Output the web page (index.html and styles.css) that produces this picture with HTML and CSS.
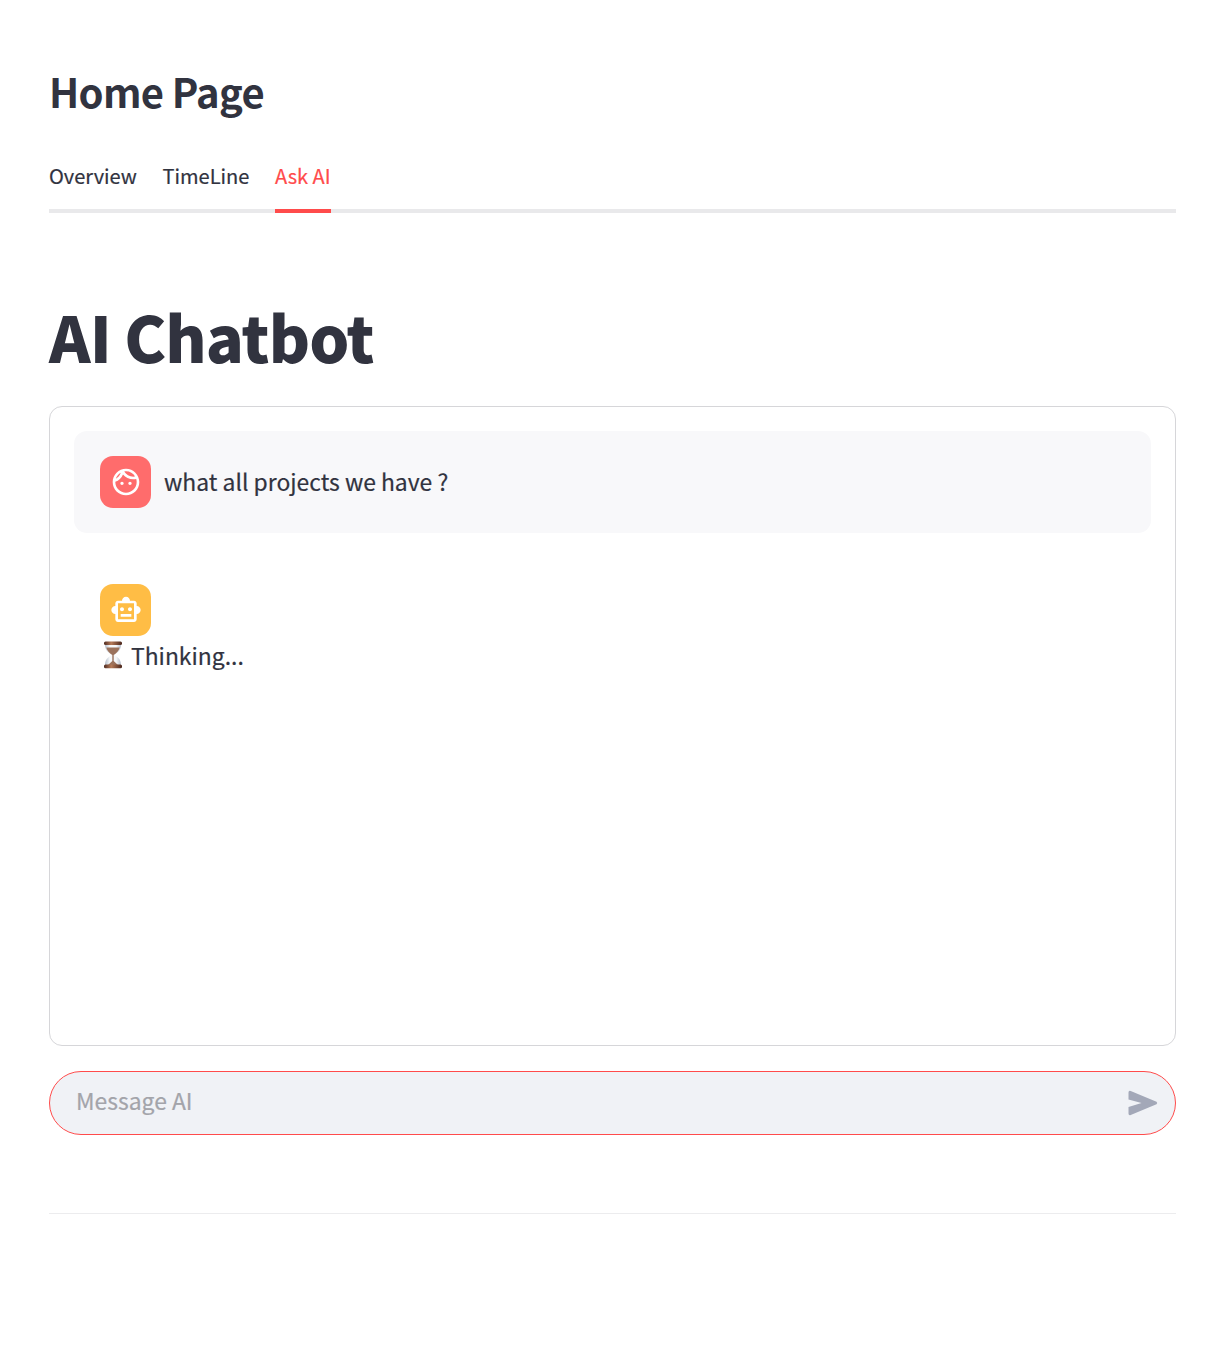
FILE: index.html
```html
<!DOCTYPE html>
<html lang="en">
<head>
<meta charset="utf-8">
<title>Home Page</title>
<link rel="stylesheet" href="styles.css">
</head>
<body>
<main class="page">
  <h2 class="page-title">Home Page</h2>
  <nav class="tabs">
    <a class="tab">Overview</a>
    <a class="tab">TimeLine</a>
    <a class="tab tab-active">Ask AI</a>
  </nav>
  <h1 class="title">AI Chatbot</h1>
  <section class="chat">
    <div class="message message-user">
      <span class="avatar avatar-user">
        <svg class="avatar-icon" viewBox="0 0 24 24"><path d="M10.25 13c0 .69-.56 1.25-1.25 1.25S7.75 13.69 7.75 13s.56-1.25 1.25-1.25 1.25.56 1.25 1.25zM15 11.75c-.69 0-1.25.56-1.25 1.25s.56 1.25 1.25 1.25 1.25-.56 1.25-1.25-.56-1.25-1.25-1.25zm7 .25c0 5.52-4.48 10-10 10S2 17.52 2 12 6.48 2 12 2s10 4.48 10 10zM10.66 4.12C12.06 6.44 14.6 8 17.5 8c.46 0 .91-.05 1.34-.12C17.44 5.56 14.9 4 12 4c-.46 0-.91.05-1.34.12zM4.42 9.47c1.71-.97 3.03-2.55 3.66-4.44C6.37 6 5.05 7.58 4.42 9.47zM20 12c0-.78-.12-1.53-.33-2.24-.7.15-1.42.24-2.17.24-3.13 0-5.92-1.44-7.76-3.69C8.69 8.87 6.6 10.88 4 11.86c.01.04 0 .09 0 .14 0 4.42 3.58 8 8 8s8-3.58 8-8z"/></svg>
      </span>
      <p class="message-text">what all projects we have ?</p>
    </div>
    <div class="message message-assistant">
      <span class="avatar avatar-assistant">
        <svg class="avatar-icon" viewBox="0 0 24 24"><path d="M20 9V7c0-1.1-.9-2-2-2h-3c0-1.66-1.34-3-3-3S9 3.34 9 5H6c-1.1 0-2 .9-2 2v2c-1.66 0-3 1.34-3 3s1.34 3 3 3v4c0 1.1.9 2 2 2h12c1.1 0 2-.9 2-2v-4c1.66 0 3-1.34 3-3s-1.34-3-3-3zm-2 10H6V7h12v12zm-9-6c-.83 0-1.5-.67-1.5-1.5S8.17 10 9 10s1.5.67 1.5 1.5S9.83 13 9 13zm7.5-1.5c0 .83-.67 1.5-1.5 1.5s-1.5-.67-1.5-1.5.67-1.5 1.5-1.5 1.5.67 1.5 1.5zM8 15h8v2H8v-2z"/></svg>
      </span>
      <div class="thinking">
        <svg class="hourglass" viewBox="0 0 20 28">
          <defs>
            <linearGradient id="wood" x1="0" x2="1" y1="0" y2="0"><stop offset="0" stop-color="#4e2a20"/><stop offset=".4" stop-color="#b57a58"/><stop offset="1" stop-color="#4a261b"/></linearGradient>
            <linearGradient id="glass" x1="0" x2="1" y1="0" y2="0"><stop offset="0" stop-color="#b4bdca"/><stop offset=".3" stop-color="#f6f8fa"/><stop offset=".7" stop-color="#f6f8fa"/><stop offset="1" stop-color="#b4bdca"/></linearGradient>
          </defs>
          <path d="M2 3.500h16c0 5-2.500 7.500-6.500 10.500 4 2.500 6.500 5 6.500 10H2c0-5 2.500-7.500 6.500-10C4.500 11 2 8.500 2 3.500z" fill="url(#glass)"/>
          <path d="M3.300 6.500h13.400c-.8 3.500-3 5.500-6 7.500v6l4.300 4H5l4.300-4v-6C6.300 12 4.100 10 3.300 6.500z" fill="#9b725c"/>
          <rect x="1" y=".5" width="18" height="3.500" rx="1.500" fill="url(#wood)"/>
          <rect x="1" y="23.500" width="18" height="3.800" rx="1.500" fill="url(#wood)"/>
        </svg>
        <p class="message-text">Thinking...</p>
      </div>
    </div>
  </section>
  <form class="composer">
    <span class="placeholder">Message AI</span>
    <svg class="send" viewBox="0 0 30 26"><path d="M.5 2.500Q.5.300 2.700 1L28.500 11.700Q30 13 28.500 14.300L2.700 25Q.5 25.700.5 23.500V17L13.500 13 .5 9.500z"/></svg>
  </form>
  <hr class="divider">
</main>
</body>
</html>
```
FILE: styles.css
```css
* { box-sizing: border-box; }
body {
  margin: 0;
  background: #fff;
  color: #31333f;
  font-family: "Noto Sans CJK SC", "Noto Sans", sans-serif;
}
.page { width: 1127px; margin-left: 49px; padding-top: 64px; }
h1, h2, p { margin: 0; }
.page-title { font-size: 40px; font-weight: 700; line-height: 54px; letter-spacing: -.700px; }
.tabs {
  display: flex;
  gap: 25.600px;
  height: 64px;
  margin-top: 31px;
  border-bottom: 4px solid #e9e9eb;
}
.tab { height: 64px; font-size: 20.050px; line-height: 53px; white-space: nowrap; -webkit-text-stroke: .2px; }
.tab-active { color: #ff4b4b; border-bottom: 4px solid #ff4b4b; }
.title { margin-top: 81px; font-size: 63px; font-weight: 900; line-height: 84px; letter-spacing: -.950px; white-space: nowrap; }
.chat {
  height: 640px;
  margin-top: 28px;
  padding: 24px;
  border: 1px solid #d6d6d9;
  border-radius: 13px;
}
.message { display: flex; padding: 25px 26px; border-radius: 13px; }
.message-user { gap: 13px; align-items: center; height: 102px; background: #f8f8fa; }
.message-assistant { flex-direction: column; margin-top: 26px; }
.avatar {
  display: grid;
  place-items: center;
  width: 51px;
  height: 52px;
  border-radius: 13px;
}
.avatar-user { background: #ff6c6c; }
.avatar-assistant { background: #ffbd45; }
.avatar-icon { width: 32px; height: 32px; fill: #fff; }
.message-text { padding-bottom: 2px; font-size: 22.900px; line-height: 38px; white-space: nowrap; -webkit-text-stroke: .2px; }
.thinking { display: flex; align-items: center; }
.hourglass { width: 20px; height: 28px; margin: 0 8px 2px 3px; }
.composer {
  display: flex;
  align-items: center;
  justify-content: space-between;
  height: 64px;
  margin-top: 25px;
  padding: 0 17px 0 26px;
  border: 1px solid #ff4b4b;
  border-radius: 32px;
  background: #f0f2f6;
}
.placeholder { padding-bottom: 6px; color: #a3a4aa; font-size: 22.900px; line-height: 40px; -webkit-text-stroke: .2px; }
.send { width: 30px; height: 26px; fill: #a3a8b8; }
.divider { height: 1px; margin: 78px 0 0; border: 0; background: #ececee; }
```
